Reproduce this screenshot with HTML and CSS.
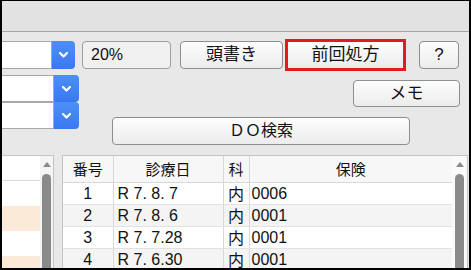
FILE: index.html
```html
<!DOCTYPE html>
<html lang="ja">
<head>
    <meta charset="UTF-8">
    <meta name="viewport" content="width=device-width, initial-scale=1.0">
    <title>処方入力</title>
    <link rel="stylesheet" href="styles.css">
</head>
<body>
    <div class="frame">
        <div class="titlebar"></div>

        <div class="toolbar">
            <div class="combo combo-top">
                <span class="combo-input"></span>
                <span class="combo-drop"><svg width="9" height="6" viewBox="0 0 9 6"><polyline points="1,1 4.5,4.5 8,1"/></svg></span>
            </div>
            <div class="field">20%</div>
            <button class="btn btn-head">頭書き</button>
            <button class="btn btn-prev">前回処方</button>
            <button class="btn btn-help">?</button>
        </div>

        <div class="middle">
            <div class="combos">
                <div class="combo combo-side">
                    <span class="combo-input"></span>
                    <span class="combo-drop"><svg width="9" height="6" viewBox="0 0 9 6"><polyline points="1,1 4.5,4.5 8,1"/></svg></span>
                </div>
                <div class="combo combo-side">
                    <span class="combo-input"></span>
                    <span class="combo-drop"><svg width="9" height="6" viewBox="0 0 9 6"><polyline points="1,1 4.5,4.5 8,1"/></svg></span>
                </div>
            </div>
            <div class="actions">
                <button class="btn btn-memo">メモ</button>
                <button class="btn btn-do">ＤＯ検索</button>
            </div>
        </div>

        <div class="lists">
            <div class="side-list">
                <div class="side-rows">
                    <div class="side-row head"></div>
                    <div class="side-row"></div>
                    <div class="side-row alt"></div>
                    <div class="side-row"></div>
                    <div class="side-row alt"></div>
                </div>
                <div class="vscroll">
                    <span class="arrow-up"></span>
                    <span class="thumb"></span>
                </div>
            </div>

            <div class="history">
                <table class="history-table">
                    <colgroup>
                        <col class="c-no">
                        <col class="c-date">
                        <col class="c-dept">
                        <col>
                    </colgroup>
                    <thead>
                        <tr><th>番号</th><th>診療日</th><th>科</th><th class="no-line">保険</th></tr>
                    </thead>
                    <tbody>
                        <tr><td class="num">1</td><td class="date">R 7. 8. 7</td><td class="dept">内</td><td class="ins">0006</td></tr>
                        <tr class="alt"><td class="num">2</td><td class="date">R 7. 8. 6</td><td class="dept">内</td><td class="ins">0001</td></tr>
                        <tr><td class="num">3</td><td class="date">R 7. 7.28</td><td class="dept">内</td><td class="ins">0001</td></tr>
                        <tr class="alt"><td class="num">4</td><td class="date">R 7. 6.30</td><td class="dept">内</td><td class="ins">0001</td></tr>
                    </tbody>
                </table>
                <div class="vscroll vscroll-wide">
                    <span class="arrow-up"></span>
                    <span class="thumb"></span>
                </div>
            </div>
        </div>
    </div>
</body>
</html>
```

FILE: styles.css
```css
*{
    margin: 0px;
    padding: 0px;
    box-sizing: border-box;
}

body{
    background: #ffffff;
    font-family: "Liberation Sans", "Noto Sans CJK JP", sans-serif;
    color: #111111;
}

.frame{
    width: 471px;
    height: 270px;
    border: 2px solid #000000;
    border-top-width: 1px;
    background: #e8e8e8;
    overflow: hidden;
    display: flex;
    flex-direction: column;
}

.titlebar{
    height: 31px;
    flex: none;
    background: #e2e2e2;
    border-bottom: 1px solid #a6a6a6;
}

/* top row */
.toolbar{
    display: flex;
    align-items: center;
    height: 32px;
    margin-top: 7px;
    flex: none;
}

.combo{
    display: flex;
    height: 28px;
}
.combo-input{
    background: #ffffff;
    border: 1px solid #a8a8a8;
    border-left: none;
}
.combo-drop{
    display: flex;
    align-items: center;
    justify-content: center;
    background: linear-gradient(#4d8ff9, #3a78f1);
    border-radius: 0 4px 4px 0;
}
.combo-drop svg polyline{
    fill: none;
    stroke: #ffffff;
    stroke-width: 2.2;
    stroke-linecap: round;
    stroke-linejoin: round;
}

.combo-top{
    width: 73px;
    margin-right: 7px;
}
.combo-top .combo-input{ width: 50px; }
.combo-top .combo-drop{ width: 23px; }

.field{
    width: 89px;
    height: 28px;
    margin-right: 9px;
    background: #f0f0f0;
    border: 1px solid #9e9e9e;
    border-radius: 4px;
    padding-left: 8px;
    font-size: 16px;
    line-height: 26px;
}

.btn{
    font-family: "Liberation Sans", "Noto Sans CJK JP", sans-serif;
    font-size: 17px;
    color: #111111;
    background: linear-gradient(#fdfdfd, #ececec);
    border: 1px solid #8e8e8e;
    border-radius: 4px;
    height: 28px;
    line-height: 24px;
    text-align: center;
}

.btn-head{
    width: 103px;
    margin-right: 2px;
}
.btn-prev{
    width: 121px;
    height: 32px;
    border: 3px solid #e01b24;
    border-radius: 0;
    margin-right: 13px;
}
.btn-help{
    width: 40px;
}

/* second block */
.middle{
    display: flex;
    flex: none;
}
.combos{
    width: 77px;
    margin-top: 4px;
}
.combo-side{
    height: 27px;
}
.combo-side .combo-input{ width: 52px; }
.combo-side .combo-drop{ width: 25px; }

.actions{
    flex: 1;
    display: flex;
    flex-direction: column;
}
.btn-memo{
    align-self: flex-end;
    width: 107px;
    height: 27px;
    margin: 9px 9px 0 0;
}
.btn-do{
    width: 298px;
    margin: 10px 0 0 33px;
    font-size: 16px;
}

/* lists */
.lists{
    flex: 1;
    display: flex;
    margin-top: 10px;
    min-height: 0;
}

.side-list{
    width: 52px;
    display: flex;
    background: #ffffff;
    border-top: 1px solid #c4c4c4;
    border-right: 1px solid #c4c4c4;
}
.side-rows{
    width: 38px;
}
.side-row{
    height: 25px;
    background: #ffffff;
}
.side-row.head{
    height: 25px;
    border-bottom: 1px solid #dcdcdc;
}
.side-row.alt{
    background: #fbead7;
}

.vscroll{
    width: 13px;
    background: #f4f4f4;
    display: flex;
    flex-direction: column;
    align-items: center;
}
.vscroll-wide{
    width: 15px;
    background: #fafafa;
}
.arrow-up{
    margin-top: 6px;
    width: 0;
    height: 0;
    border-left: 4px solid transparent;
    border-right: 4px solid transparent;
    border-bottom: 5px solid #8a8a8a;
}
.thumb{
    margin-top: 7px;
    flex: 1;
    width: 9px;
    background: #8a8a8a;
    border-radius: 5px 5px 0 0;
}

.history{
    flex: 1;
    margin-left: 8px;
    margin-right: 1px;
    display: flex;
    background: #ffffff;
    border-top: 1px solid #c4c4c4;
    border-left: 1px solid #c4c4c4;
    border-right: 1px solid #c4c4c4;
}

.history-table{
    flex: 1;
    border-collapse: collapse;
    table-layout: fixed;
    align-self: flex-start;
}
.c-no{ width: 50px; }
.c-date{ width: 110px; }
.c-dept{ width: 26px; }

.history-table th{
    height: 26px;
    background: #f7f7f7;
    font-family: "Noto Sans CJK JP", sans-serif;
    font-weight: normal;
    font-size: 15px;
    line-height: 25px;
    border-right: 1px solid #d8d8d8;
    border-bottom: 1px solid #d8d8d8;
}
.history-table th.no-line{
    border-right: none;
}
.history-table td{
    height: 22px;
    font-size: 16px;
    line-height: 21px;
    border-right: 1px solid #d8d8d8;
    border-bottom: 1px solid #e2e2e2;
    white-space: pre;
}
.history-table tr.alt td{
    background: #f4f4f4;
}
.history-table td:last-child{
    border-right: none;
}
.num{
    text-align: center;
}
.date{
    padding-left: 4px;
}
.dept{
    text-align: center;
    font-family: "Noto Sans CJK JP", sans-serif;
}
.ins{
    padding-left: 2px;
}
```
